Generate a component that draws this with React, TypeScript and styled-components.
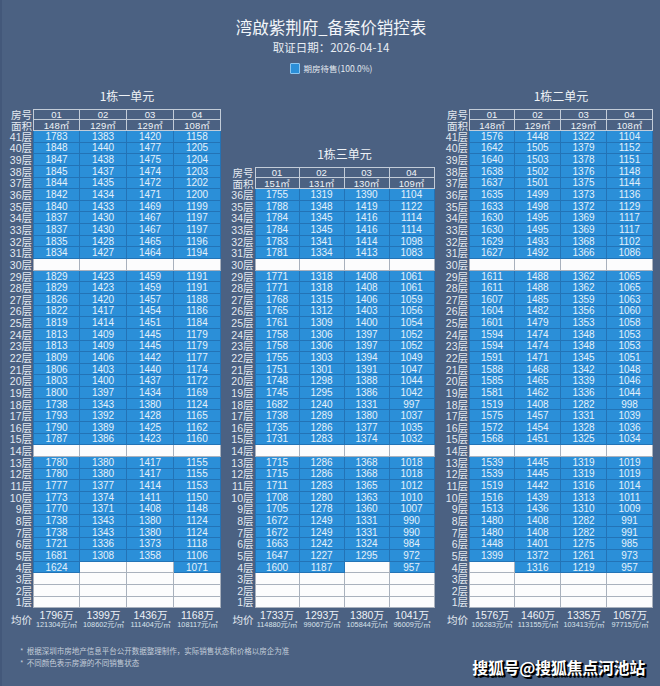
import React from "react";
import styled, { createGlobalStyle } from "styled-components";

const Global = createGlobalStyle`
  html, body { margin: 0; padding: 0; background: #4b6182; }
  body { font-family: "Noto Sans CJK SC", "Noto Sans", sans-serif; }
`;

type Kind = "head" | "blue" | "white";

const palette: Record<Kind, { bg: string; border: string; color: string }> = {
  head: { bg: "transparent", border: "#c3ccd8", color: "#f0f4f8" },
  blue: { bg: "#2b8fd8", border: "#2373b6", color: "#e3effa" },
  white: { bg: "#fcfcfd", border: "#a9b1bd", color: "transparent" },
};

const NUM_FONT = `"Liberation Sans", "Noto Sans CJK SC", sans-serif`;

const Page = styled.div`
  position: relative;
  width: 660px;
  height: 686px;
  box-sizing: border-box;
  padding-top: 17px;
  background: #4b6182;
  border-left: 2px solid #43587a;
  overflow: hidden;
  display: flex;
  flex-direction: column;
`;

const Header = styled.header`
  display: flex;
  flex-direction: column;
  align-items: center;
`;

const Title = styled.h1`
  margin: 0;
  font-size: 16.5px;
  line-height: 20px;
  font-weight: 400;
  color: #f2f5f9;
`;

const Subtitle = styled.div`
  margin-top: 3px;
  font-size: 11.5px;
  line-height: 14px;
  color: #e9eef4;
`;

const Legend = styled.div`
  margin-top: 8px;
  height: 12px;
  display: flex;
  align-items: center;
  gap: 4px;
  font-size: 8.5px;
  line-height: 12px;
  color: #e3e9f0;
`;

const Swatch = styled.span`
  width: 10px;
  height: 11px;
  box-sizing: border-box;
  background: #2b8fd8;
  border: 1px solid #8cc6f0;
  border-radius: 1px;
`;

const Tables = styled.div`
  margin-top: 12px;
  padding: 0 7px 0 6px;
  display: flex;
  justify-content: space-between;
  align-items: flex-end;
`;

const Unit = styled.section`
  display: flex;
  flex-direction: column;
`;

const UnitTitle = styled.div<{ $offset: number }>`
  margin-left: ${(p) => p.$offset}px;
  margin-bottom: 3px;
  text-align: center;
  font-size: 12px;
  line-height: 20px;
  color: #eef2f6;
`;

const Grid = styled.div<{ $label: number; $col: number; $rows: number }>`
  display: grid;
  grid-template-columns: ${(p) => p.$label}px repeat(4, ${(p) => p.$col}px);
  grid-template-rows: 11px 11px repeat(${(p) => p.$rows}, 11.65px) auto;
`;

const FloorLabel = styled.div`
  display: flex;
  align-items: center;
  justify-content: flex-end;
  padding-right: 1px;
  font-family: ${NUM_FONT};
  font-size: 10.5px;
  line-height: 10px;
  color: #e3e9f0;
  white-space: nowrap;
`;

const Cell = styled.div<{ $kind: Kind; $first?: boolean; $top?: boolean }>`
  display: flex;
  align-items: center;
  justify-content: center;
  box-sizing: border-box;
  background: ${(p) => palette[p.$kind].bg};
  color: ${(p) => palette[p.$kind].color};
  border-right: 1px solid ${(p) => palette[p.$kind].border};
  border-bottom: 1px solid ${(p) => palette[p.$kind].border};
  border-left: ${(p) => (p.$first ? `1px solid ${palette[p.$kind].border}` : "none")};
  border-top: ${(p) => (p.$top ? `1px solid ${palette[p.$kind].border}` : "none")};
  font-family: ${NUM_FONT};
  font-size: ${(p) => (p.$kind === "head" ? "9.5px" : "10px")};
  line-height: 9px;
  white-space: nowrap;
`;

const AvgLabel = styled.div`
  display: flex;
  align-items: center;
  justify-content: flex-end;
  padding: 3px 1px 0 0;
  font-size: 10.5px;
  line-height: 12px;
  color: #e3e9f0;
`;

const AvgCell = styled.div`
  display: flex;
  flex-direction: column;
  align-items: center;
  padding-top: 2px;
  white-space: nowrap;
  font-family: ${NUM_FONT};
`;

const AvgTotal = styled.span`
  font-size: 10.5px;
  line-height: 11px;
  color: #eef2f7;
`;

const AvgUnit = styled.span`
  font-size: 7.3px;
  line-height: 8px;
  color: #d9e1eb;
`;

const Notes = styled.div`
  margin-top: 16px;
  padding-left: 18px;
  display: flex;
  flex-direction: column;
  font-size: 7.5px;
  line-height: 12px;
  color: #c4cdd9;
`;

const Watermark = styled.div`
  position: absolute;
  right: 15px;
  bottom: 9px;
  font-size: 16px;
  line-height: 20px;
  font-weight: 700;
  color: #ffffff;
  text-shadow: 2px 2px 0 #000, 1px 1px 1px #000, 2px 1px 0 #000;
  letter-spacing: -0.3px;
`;

type UnitData = {
  title: string;
  label: number;
  col: number;
  top: number;
  areas: string[];
  raw: string;
  avgs: [string, string][];
};

const U1: UnitData = {
  title: "1栋一单元",
  label: 25,
  col: 47,
  top: 41,
  areas: ["148㎡", "129㎡", "129㎡", "108㎡"],
  raw: `
41 1783 1383 1420 1158
40 1848 1440 1477 1205
39 1847 1438 1475 1204
38 1845 1437 1474 1203
37 1844 1435 1472 1202
36 1842 1434 1471 1200
35 1840 1433 1469 1199
34 1837 1430 1467 1197
33 1837 1430 1467 1197
32 1835 1428 1465 1196
31 1834 1427 1464 1194
29 1829 1423 1459 1191
28 1829 1423 1459 1191
27 1826 1420 1457 1188
26 1822 1417 1454 1186
25 1819 1414 1451 1184
24 1813 1409 1445 1179
23 1813 1409 1445 1179
22 1809 1406 1442 1177
21 1806 1403 1440 1174
20 1803 1400 1437 1172
19 1800 1397 1434 1169
18 1738 1343 1380 1124
17 1793 1392 1428 1165
16 1790 1389 1425 1162
15 1787 1386 1423 1160
13 1780 1380 1417 1155
12 1780 1380 1417 1155
11 1777 1377 1414 1153
10 1773 1374 1411 1150
9 1770 1371 1408 1148
8 1738 1343 1380 1124
7 1738 1343 1380 1124
6 1721 1336 1373 1118
5 1681 1308 1358 1106
4 1624 - - 1071
`,
  avgs: [
    ["1796万", "121304元/㎡"],
    ["1399万", "108602元/㎡"],
    ["1436万", "111404元/㎡"],
    ["1168万", "108117元/㎡"],
  ],
};

const U3: UnitData = {
  title: "1栋三单元",
  label: 25,
  col: 45,
  top: 36,
  areas: ["151㎡", "131㎡", "130㎡", "109㎡"],
  raw: `
36 1755 1319 1390 1104
35 1788 1348 1419 1122
34 1784 1345 1416 1114
33 1784 1345 1416 1114
32 1783 1341 1414 1098
31 1781 1334 1413 1083
29 1771 1318 1408 1061
28 1771 1318 1408 1061
27 1768 1315 1406 1059
26 1765 1312 1403 1056
25 1761 1309 1400 1054
24 1758 1306 1397 1052
23 1758 1306 1397 1052
22 1755 1303 1394 1049
21 1751 1301 1391 1047
20 1748 1298 1388 1044
19 1745 1295 1386 1042
18 1682 1240 1331 997
17 1738 1289 1380 1037
16 1735 1286 1377 1035
15 1731 1283 1374 1032
13 1715 1286 1368 1018
12 1715 1286 1368 1018
11 1711 1283 1365 1012
10 1708 1280 1363 1010
9 1705 1278 1360 1007
8 1672 1249 1331 990
7 1672 1249 1331 990
6 1663 1242 1324 984
5 1647 1227 1295 972
4 1600 1187 - 957
`,
  avgs: [
    ["1733万", "114880元/㎡"],
    ["1293万", "99067元/㎡"],
    ["1380万", "105844元/㎡"],
    ["1041万", "96009元/㎡"],
  ],
};

const U2: UnitData = {
  title: "1栋二单元",
  label: 26,
  col: 46,
  top: 41,
  areas: ["148㎡", "129㎡", "129㎡", "108㎡"],
  raw: `
41 1576 1448 1322 1104
40 1642 1505 1379 1152
39 1640 1503 1378 1151
38 1638 1502 1376 1148
37 1637 1501 1375 1144
36 1635 1499 1373 1136
35 1633 1498 1372 1129
34 1630 1495 1369 1117
33 1630 1495 1369 1117
32 1629 1493 1368 1102
31 1627 1492 1366 1086
29 1611 1488 1362 1065
28 1611 1488 1362 1065
27 1607 1485 1359 1063
26 1604 1482 1356 1060
25 1601 1479 1353 1058
24 1594 1474 1348 1053
23 1594 1474 1348 1053
22 1591 1471 1345 1051
21 1588 1468 1342 1048
20 1585 1465 1339 1046
19 1581 1462 1336 1044
18 1519 1408 1282 998
17 1575 1457 1331 1039
16 1572 1454 1328 1036
15 1568 1451 1325 1034
13 1539 1445 1319 1019
12 1539 1445 1319 1019
11 1519 1442 1316 1014
10 1516 1439 1313 1011
9 1513 1436 1310 1009
8 1480 1408 1282 991
7 1480 1408 1282 991
6 1448 1401 1275 985
5 1399 1372 1261 973
4 - 1316 1219 957
`,
  avgs: [
    ["1576万", "106283元/㎡"],
    ["1460万", "113155元/㎡"],
    ["1335万", "103413元/㎡"],
    ["1057万", "97715元/㎡"],
  ],
};

function parse(raw: string): Map<number, (string | null)[]> {
  const m = new Map<number, (string | null)[]>();
  raw
    .trim()
    .split("\n")
    .forEach((line) => {
      const parts = line.trim().split(/\s+/);
      const floor = parseInt(parts[0], 10);
      m.set(
        floor,
        parts.slice(1).map((v) => (v === "-" ? null : v))
      );
    });
  return m;
}

const UnitTable: React.FC<{ u: UnitData }> = ({ u }) => {
  const map = parse(u.raw);
  const floors: number[] = [];
  for (let f = u.top; f >= 1; f--) floors.push(f);
  return (
    <Unit>
      <UnitTitle $offset={u.label}>{u.title}</UnitTitle>
      <Grid $label={u.label} $col={u.col} $rows={floors.length}>
        <FloorLabel>房号</FloorLabel>
        {["01", "02", "03", "04"].map((n, i) => (
          <Cell key={n} $kind="head" $first={i === 0} $top>
            {n}
          </Cell>
        ))}
        <FloorLabel>面积</FloorLabel>
        {u.areas.map((a, i) => (
          <Cell key={i} $kind="head" $first={i === 0}>
            {a}
          </Cell>
        ))}
        {floors.map((f) => {
          const cells = map.get(f) ?? [null, null, null, null];
          return (
            <React.Fragment key={f}>
              <FloorLabel>{f}层</FloorLabel>
              {cells.map((v, i) => (
                <Cell key={i} $kind={v ? "blue" : "white"} $first={i === 0}>
                  {v ?? ""}
                </Cell>
              ))}
            </React.Fragment>
          );
        })}
        <AvgLabel>均价</AvgLabel>
        {u.avgs.map(([t, per], i) => (
          <AvgCell key={i}>
            <AvgTotal>{t}</AvgTotal>
            <AvgUnit>{per}</AvgUnit>
          </AvgCell>
        ))}
      </Grid>
    </Unit>
  );
};

export default function App() {
  return (
    <Page>
      <Global />
      <Header>
        <Title>湾啟紫荆府_备案价销控表</Title>
        <Subtitle>取证日期：2026-04-14</Subtitle>
        <Legend>
          <Swatch />
          <span>期房待售(100.0%)</span>
        </Legend>
      </Header>
      <Tables>
        <UnitTable u={U1} />
        <UnitTable u={U3} />
        <UnitTable u={U2} />
      </Tables>
      <Notes>
        <span>* &nbsp;根据深圳市房地产信息平台公开数据整理制作，实际销售状态和价格以房企为准</span>
        <span>* &nbsp;不同颜色表示房源的不同销售状态</span>
      </Notes>
      <Watermark>搜狐号@搜狐焦点河池站</Watermark>
    </Page>
  );
}
